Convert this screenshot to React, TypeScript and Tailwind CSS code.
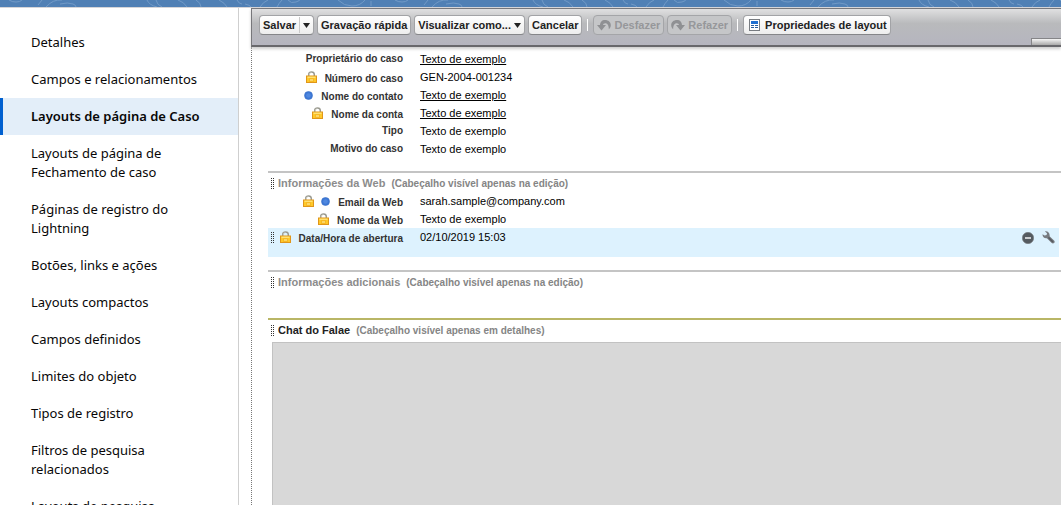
import type { ReactNode } from "react";

const navItems = [
  "Detalhes",
  "Campos e relacionamentos",
  "Layouts de página de Caso",
  "Layouts de página de Fechamento de caso",
  "Páginas de registro do Lightning",
  "Botões, links e ações",
  "Layouts compactos",
  "Campos definidos",
  "Limites do objeto",
  "Tipos de registro",
  "Filtros de pesquisa relacionados",
  "Layouts de pesquisa",
];
const activeItem = "Layouts de página de Caso";

function BannerPattern() {
  return (
    <svg className="h-full w-full" aria-hidden="true">
      <defs>
        <pattern id="contours" width="386" height="7" patternUnits="userSpaceOnUse">
          <g fill="none" stroke="#7099c6" strokeWidth="1">
            <path d="M9 0q3 2 7 2t6-2M38 5l4-5M46 7Q53-1 62 0M60 4q8-2 13 0 3 1 3 3M147 0q2 5 10 7M156 0q1 5 6 7M178 0q6 2 9 7M196 0q5 3 5 7M219 0q6 3 8 7M237 0q2 4 5 4M245 4q5 1 6 3M260 7q3-5 8-7M277 7q2-4 5-7M288 0q3 4 8 2t3-2M338 0q6 6 14 6t13-6M371 1v5" />
          </g>
        </pattern>
      </defs>
      <rect width="100%" height="100%" fill="url(#contours)" />
    </svg>
  );
}

function LockIcon() {
  return (
    <svg width="11" height="12" viewBox="0 0 11 12" className="shrink-0" aria-label="Somente leitura">
      <path d="M2.7 6V3.5a2.8 2.6 0 0 1 5.6 0V6" fill="none" stroke="#9a9a90" strokeWidth="1.5" />
      <path d="M3.2 5V3.5a2.3 2.1 0 0 1 2.3-2" fill="none" stroke="#d2d2c8" strokeWidth=".6" />
      <rect x=".5" y="5" width="10" height="6.5" fill="#ffc928" stroke="#e0961a" />
      <path d="M1.5 6.2h8" stroke="#ffec96" />
      <path d="M3 8h5M3 10h5" stroke="#f0aa20" />
      <path d="M4 9h3" stroke="#fff2ae" />
    </svg>
  );
}

function DotIcon() {
  return (
    <svg width="9" height="9" viewBox="0 0 9 9" className="shrink-0" aria-label="Sempre no layout">
      <circle cx="4.5" cy="4.5" r="4" fill="#3d78d6" stroke="#3a70c8" strokeWidth=".6" />
      <circle cx="4.5" cy="4.5" r="2.3" fill="#5088df" />
    </svg>
  );
}

function Grip() {
  return (
    <svg width="4" height="11" viewBox="0 0 4 11" className="shrink-0" aria-hidden="true">
      <path d="M.5 0v11M2.5 0v11" stroke="#333" strokeDasharray="1 1" />
    </svg>
  );
}

function UndoIcon({ flip = false }: { flip?: boolean }) {
  return (
    <svg width="14" height="12" viewBox="0 0 14 12" className={flip ? "-scale-x-100" : ""} aria-hidden="true">
      <path d="M0 6h9L4.5 11.500z" fill="#8f9093" />
      <path d="M3 6.500C3 3 5 1 8 1c3.400 0 5.800 2.200 5.800 5.200 0 1.700-.8 3.100-2 4 .1-3.700-1.300-5.900-3.400-5.900-1.500 0-2.400.8-2.400 2.200z" fill="#8f9093" />
    </svg>
  );
}

function PropertiesIcon() {
  return (
    <svg width="11" height="12" viewBox="0 0 11 12" className="shrink-0" aria-hidden="true">
      <rect x=".5" y=".5" width="10" height="11" fill="#fff" stroke="#777b80" />
      <path d="M2 3.500h7" stroke="#1f6fd0" strokeWidth="3" />
      <path d="M2 6.500h3M6 6.500h3M2 8.500h3M6 8.500h3" stroke="#2a5f9f" />
    </svg>
  );
}

function Caret() {
  return (
    <svg width="7" height="5" viewBox="0 0 7 5" className="shrink-0" aria-hidden="true">
      <path d="M0 0h7L3.500 5z" fill="#222" />
    </svg>
  );
}

function ToolButton({ children, disabled = false }: { children: ReactNode; disabled?: boolean }) {
  return (
    <button
      type="button"
      disabled={disabled}
      className={
        "flex h-5 shrink-0 items-center gap-[3px] whitespace-nowrap rounded-sm border px-[3px] font-bold " +
        (disabled
          ? "border-[#a4a5a8] bg-[#c5c6c8] text-[#96979a]"
          : "border-[#a2a3a6] border-b-[#858689] bg-linear-to-b from-white to-[#ededed] text-[#222]")
      }
    >
      {children}
    </button>
  );
}

function ToolSeparator() {
  return <span className="mx-[2px] h-3 w-px bg-white" />;
}

type FieldProps = {
  label: string;
  value: string;
  link?: boolean;
  lock?: boolean;
  dot?: boolean;
};

function FieldContent({ label, value, link, lock, dot }: FieldProps) {
  return (
    <>
      <dt
        className={
          "flex w-[135px] shrink-0 items-center justify-end whitespace-nowrap text-[10px] font-bold text-[#333] " +
          (lock || dot ? "pt-[2px]" : "")
        }
      >
        <span className="-mt-1 mr-2 flex items-center gap-[7px] empty:hidden">
          {lock && <LockIcon />}
          {dot && <DotIcon />}
        </span>
        {label}
      </dt>
      <dd className="pl-[17px] text-black">
        {link ? <a href="#exemplo" className="underline">{value}</a> : value}
      </dd>
    </>
  );
}

function Field(props: FieldProps) {
  return (
    <div className="flex h-[18px] items-start leading-[18px]">
      <FieldContent {...props} />
    </div>
  );
}

function SectionTitle({ title, note, strong = false }: { title: string; note: string; strong?: boolean }) {
  return (
    <h2
      className={
        "flex h-[21px] items-center border-t-2 pl-[3px] pt-[2px] font-bold " +
        (strong ? "border-[#b9b666] text-[#222]" : "border-[#c4c4c4] text-[#8c8c8c]")
      }
    >
      <Grip />
      <span className="pl-[3px]">{title}</span>
      <span className="pl-[6px] text-[10px] text-[#858585]">{note}</span>
    </h2>
  );
}

export default function App() {
  return (
    <div className="flex h-screen flex-col overflow-hidden bg-white">
      <header className="h-[7px] shrink-0 bg-[#5080b5]">
        <BannerPattern />
      </header>
      <div className="flex min-h-0 flex-1 border-t border-[#d5d5d8]">
        <nav className="w-[239px] shrink-0 overflow-hidden border-r border-[#cfcfcf] pt-4 font-['Noto_Sans',sans-serif] text-[13px] leading-[19px] text-[#080707]">
          <ul>
            {navItems.map((item) => (
              <li key={item}>
                <a
                  href="#configuracao"
                  aria-current={item === activeItem ? "page" : undefined}
                  className={
                    "block border-l-3 py-[9px] pl-7 pr-8 " +
                    (item === activeItem ? "border-[#0060d0] bg-[#e3eef9] font-semibold" : "border-transparent")
                  }
                >
                  {item}
                </a>
              </li>
            ))}
          </ul>
        </nav>

        <main className="ml-3 flex min-w-0 flex-1 flex-col font-['Liberation_Sans',Arial,sans-serif] text-[11px]">
          <div className="relative flex h-[39px] shrink-0 items-start border-t border-b-2 border-l border-t-[#77777b] border-b-[#68686c] border-l-[#77777b] bg-linear-to-b from-[#e0e0e1] via-[#b9babc] via-40% to-[#b5b5bf] pl-[7px] pt-[6px] shadow-[0_2px_3px_#cccccc]">
            <div role="toolbar" className="flex items-center gap-[3px]">
              <ToolButton>
                Salvar
                <span className="h-4 border-l border-[#c9c9c9]" />
                <Caret />
              </ToolButton>
              <ToolButton>Gravação rápida</ToolButton>
              <ToolButton>
                Visualizar como...
                <Caret />
              </ToolButton>
              <ToolButton>Cancelar</ToolButton>
              <ToolSeparator />
              <ToolButton disabled>
                <UndoIcon />
                Desfazer
              </ToolButton>
              <ToolButton disabled>
                <UndoIcon flip />
                Refazer
              </ToolButton>
              <ToolSeparator />
              <ToolButton>
                <span className="px-[2px]">
                  <PropertiesIcon />
                </span>
                Propriedades de layout
              </ToolButton>
            </div>
            <div className="absolute bottom-0 right-0 h-[7px] w-[30px] border-l border-t border-[#858588] bg-linear-to-b from-[#f5f5f5] to-[#aaa]" />
          </div>

          <div className="min-h-0 flex-1 overflow-hidden border-l border-dotted border-[#777] pl-4">
            <div className="flex h-full flex-col pt-[3px]">
              <section>
                <dl>
                  <Field label="Proprietário do caso" value="Texto de exemplo" link />
                  <Field label="Número do caso" value="GEN-2004-001234" lock />
                  <Field label="Nome do contato" value="Texto de exemplo" link dot />
                  <Field label="Nome da conta" value="Texto de exemplo" link lock />
                  <Field label="Tipo" value="Texto de exemplo" />
                  <Field label="Motivo do caso" value="Texto de exemplo" />
                </dl>
              </section>

              <section className="pt-[13px]">
                <SectionTitle title="Informações da Web" note="(Cabeçalho visível apenas na edição)" />
                <dl>
                  <Field label="Email da Web" value="sarah.sample@company.com" lock dot />
                  <Field label="Nome da Web" value="Texto de exemplo" lock />
                  <div className="relative mr-[2px] flex h-[29px] items-start bg-[#ddf2fe] leading-[18px]">
                    <span className="absolute left-[3px] top-1">
                      <Grip />
                    </span>
                    <FieldContent label="Data/Hora de abertura" value="02/10/2019 15:03" lock />
                    <div className="ml-auto flex gap-2 pr-1 pt-[3px]">
                      <button type="button" aria-label="Remover">
                        <svg width="12" height="12" viewBox="0 0 12 12">
                          <circle cx="6" cy="6" r="5.700" fill="#555b60" stroke="#777c80" strokeWidth=".6" />
                          <path d="M3 6h6" stroke="#fff" strokeWidth="1.400" />
                        </svg>
                      </button>
                      <button type="button" aria-label="Propriedades">
                        <svg width="13" height="13" viewBox="0 0 13 13">
                          <path d="M3 .4 5 2.200 4.600 4 2.600 4.400.500 3.200C.300 5.800 2.400 7.700 4.900 7.200l4.800 4.900c1.800 1.200 3.800-.7 2.600-2.400L7.600 5.300C8.100 2.300 5.900-.2 3 .4z" fill="#777b80" />
                          <path d="m6.500 6.500 4.500 4.500" stroke="#56595e" strokeWidth="1.500" />
                        </svg>
                      </button>
                    </div>
                  </div>
                </dl>
              </section>

              <section className="pb-[27px] pt-[13px]">
                <SectionTitle title="Informações adicionais" note="(Cabeçalho visível apenas na edição)" />
              </section>

              <section className="flex min-h-0 flex-1 flex-col">
                <SectionTitle strong title="Chat do Falae" note="(Cabeçalho visível apenas em detalhes)" />
                <div className="ml-1 mt-[3px] flex-1 border-l border-t border-[#c2c2c2] bg-[#d8d8d8]" />
              </section>
            </div>
          </div>
        </main>
      </div>
    </div>
  );
}
